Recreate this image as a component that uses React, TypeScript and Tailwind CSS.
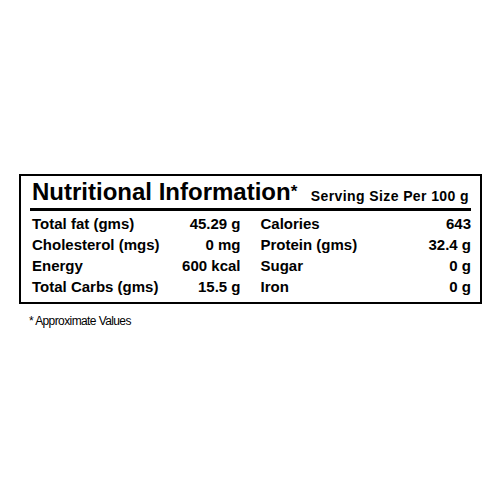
export default function App() {
  const left = [
    ["Total fat (gms)", "45.29 g"],
    ["Cholesterol (mgs)", "0 mg"],
    ["Energy", "600 kcal"],
    ["Total Carbs (gms)", "15.5 g"],
  ];
  const right = [
    ["Calories", "643"],
    ["Protein (gms)", "32.4 g"],
    ["Sugar", "0 g"],
    ["Iron", "0 g"],
  ];
  return (
    <div className="w-[500px] h-[500px] bg-white flex flex-col pt-[174px] pl-[19px]" style={{ fontFamily: '"Liberation Sans", Arial, sans-serif' }}>
      <div className="w-[463px] border-2 border-black px-[9px] pt-[2px] pb-[5px] text-black">
        <div className="flex items-end justify-between border-b-[3px] border-black pb-[3px] whitespace-nowrap">
          <div className="text-[24px] font-bold leading-[27px] pl-[2px]">
            Nutritional Information<span className="align-top text-[17px]">*</span>
          </div>
          <div className="text-[14px] font-bold leading-[18px] pr-[2px] tracking-[0.4px]">
            Serving Size Per 100 g
          </div>
        </div>
        <div className="flex pt-[2px] pl-[2px] text-[15px] font-bold leading-[21px] whitespace-nowrap">
          <div className="w-[210px] flex flex-col">
            {left.map(([a, b]) => (
              <div key={a} className="flex justify-between"><span>{a}</span><span>{b}</span></div>
            ))}
          </div>
          <div className="w-[212px] ml-[20px] flex flex-col">
            {right.map(([a, b]) => (
              <div key={a} className="flex justify-between"><span>{a}</span><span>{b}</span></div>
            ))}
          </div>
        </div>
      </div>
      <div className="mt-[10px] pl-[10px] text-[12px] leading-[14px] tracking-[-0.6px] text-black">
        * Approximate Values
      </div>
    </div>
  );
}
